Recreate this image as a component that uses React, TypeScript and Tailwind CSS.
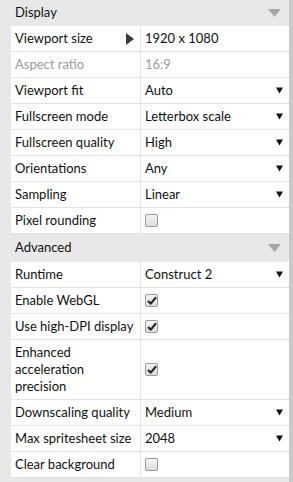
import React from "react";

type Row = {
  label: string;
  value?: string;
  kind: "text" | "select" | "check" | "disabled" | "size";
  checked?: boolean;
  tall?: boolean;
};

const display: Row[] = [
  { label: "Viewport size", value: "1920 x 1080", kind: "size" },
  { label: "Aspect ratio", value: "16:9", kind: "disabled" },
  { label: "Viewport fit", value: "Auto", kind: "select" },
  { label: "Fullscreen mode", value: "Letterbox scale", kind: "select" },
  { label: "Fullscreen quality", value: "High", kind: "select" },
  { label: "Orientations", value: "Any", kind: "select" },
  { label: "Sampling", value: "Linear", kind: "select" },
  { label: "Pixel rounding", kind: "check", checked: false },
];

const advanced: Row[] = [
  { label: "Runtime", value: "Construct 2", kind: "select" },
  { label: "Enable WebGL", kind: "check", checked: true },
  { label: "Use high-DPI display", kind: "check", checked: true },
  { label: "Enhanced acceleration precision", kind: "check", checked: true, tall: true },
  { label: "Downscaling quality", value: "Medium", kind: "select" },
  { label: "Max spritesheet size", value: "2048", kind: "select" },
  { label: "Clear background", kind: "check", checked: false },
];

function Checkbox({ checked }: { checked?: boolean }) {
  return (
    <div className="w-[13px] h-[13px] rounded-[2px] border border-[#9a9a9a] bg-gradient-to-b from-[#f4f4f4] to-[#dcdcdc] flex items-center justify-center">
      {checked && (
        <svg width="10" height="9" viewBox="0 0 10 9">
          <path d="M1 5 L3.8 7.6 L9 1.2" fill="none" stroke="#2a2a2a" strokeWidth="2.2" strokeLinejoin="round" />
        </svg>
      )}
    </div>
  );
}

function Header({ title, h }: { title: string; h: string }) {
  return (
    <div className={`flex items-center justify-between pl-[15px] pr-[8px] ${h}`}>
      <span className="text-[13px] text-[#111]">{title}</span>
      <svg width="13" height="8" viewBox="0 0 13 8">
        <path d="M0 0 H13 L6.5 8 Z" fill="#a6a6a6" />
      </svg>
    </div>
  );
}

function PropRow({ row }: { row: Row }) {
  const h = row.tall ? "h-[60px]" : "h-[26px]";
  return (
    <div className={`flex border-b border-[#e3e3e3] ${h}`}>
      <div className="w-[130px] shrink-0 border-r border-[#e3e3e3] pl-[4px] pr-[2px] flex items-center justify-between">
        <span
          className={`text-[13px] leading-[17px] ${row.kind === "disabled" ? "text-[#9b9b9b]" : "text-[#111]"} ${row.tall ? "w-[100px]" : "whitespace-nowrap"}`}
        >
          {row.label}
        </span>
        {row.kind === "size" && (
          <svg width="8" height="12" viewBox="0 0 8 12" className="mr-[4px] shrink-0">
            <path d="M0 0 L8 6 L0 12 Z" fill="#3a3a3a" />
          </svg>
        )}
      </div>
      <div className="flex-1 pl-[4px] pr-[6px] flex items-center justify-between">
        {row.kind === "check" ? (
          <Checkbox checked={row.checked} />
        ) : (
          <span className={`text-[13px] whitespace-nowrap ${row.kind === "disabled" ? "text-[#9b9b9b]" : "text-[#111]"}`}>{row.value}</span>
        )}
        {row.kind === "select" && (
          <svg width="7" height="7" viewBox="0 0 7 7">
            <path d="M0 0.5 H7 L3.5 6.5 Z" fill="#111" />
          </svg>
        )}
      </div>
    </div>
  );
}

export default function App() {
  return (
    <div
      className="w-[293px] h-[482px] bg-[#e8e8e8] flex overflow-hidden"
      style={{ fontFamily: 'Lato, "Noto Sans", sans-serif' }}
    >
      <div className="w-[289px] flex flex-col">
        <Header title="Display" h="h-[26px]" />
        <div className="ml-[11px] bg-white">
          {display.map((r) => (
            <PropRow key={r.label} row={r} />
          ))}
        </div>
        <Header title="Advanced" h="h-[28px]" />
        <div className="ml-[11px] bg-white">
          {advanced.map((r) => (
            <PropRow key={r.label} row={r} />
          ))}
        </div>
      </div>
      <div className="w-[4px] h-full bg-[#c9c9c9]" />
    </div>
  );
}
